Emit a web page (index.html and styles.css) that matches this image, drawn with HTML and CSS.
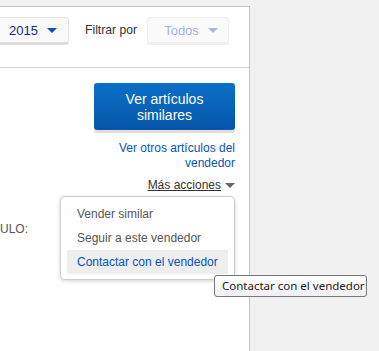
FILE: index.html
```html
<!DOCTYPE html>
<html lang="es">
<head>
<meta charset="utf-8">
<title>Ver artículos similares</title>
<link rel="stylesheet" href="styles.css">
</head>
<body>
<div class="page">
  <div class="panel">
    <div class="toolbar">
      <div class="select year">
        <span class="select-text">2015</span>
        <span class="caret"></span>
      </div>
      <span class="filter-label">Filtrar por</span>
      <div class="select all">
        <span class="select-text">Todos</span>
        <span class="caret"></span>
      </div>
    </div>
    <div class="content">
      <div class="actions">
        <a class="primary-btn" href="#">Ver artículos<br>similares</a>
        <a class="seller-link" href="#">Ver otros artículos del<br>vendedor</a>
        <div class="more">
          <a class="more-link" href="#">Más acciones</a>
          <span class="more-caret"></span>
        </div>
      </div>
      <div class="field-label">ULO:</div>
      <ul class="menu">
        <li class="menu-item">Vender similar</li>
        <li class="menu-item">Seguir a este vendedor</li>
        <li class="menu-item active">Contactar con el vendedor</li>
      </ul>
    </div>
  </div>
  <div class="side"></div>
</div>
<div class="tooltip">Contactar con el vendedor</div>
</body>
</html>
```
FILE: styles.css
```css
html, body {
  margin: 0;
  padding: 0;
}
body {
  width: 379px;
  height: 351px;
  overflow: hidden;
  background: #f1f1f1;
  font-family: "Liberation Sans", Arial, sans-serif;
  color: #333;
  position: relative;
}
.page {
  display: flex;
  height: 351px;
}
.panel {
  width: 249px;
  margin-top: 6px;
  background: #fff;
  border-top: 1px solid #c8c8c8;
  border-right: 1px solid #c8c8c8;
}
.toolbar {
  display: flex;
  align-items: flex-start;
  height: 50px;
  padding-top: 10px;
  border-bottom: 1px solid #cfcfcf;
}
.select {
  box-sizing: border-box;
  height: 28px;
  display: flex;
  align-items: center;
  background: #f9f9f9;
  border: 1px solid #e6e6e6;
  border-bottom: 3px solid #dcdcdc;
  border-radius: 3px;
  font-size: 13px;
}
.year {
  width: 81px;
  margin-left: -12px;
  padding-left: 21px;
  color: #0c2d8c;
  border-left: none;
}
.year .caret {
  margin-left: 9px;
  border-top: 5px solid #0654ba;
}
.caret {
  width: 0;
  height: 0;
  border-left: 5px solid transparent;
  border-right: 5px solid transparent;
}
.filter-label {
  margin-left: 16px;
  margin-top: 6px;
  font-size: 12.2px;
  line-height: 15px;
  color: #333;
}
.all {
  width: 82px;
  margin-left: 10px;
  padding-left: 16px;
  color: #a2b3e0;
  background: #fbfbfb;
  border-color: #efefef;
  border-bottom-color: #eeeeee;
}
.all .caret {
  margin-left: 9px;
  border-top: 5px solid #a8b8e2;
}
.content {
  position: relative;
  padding-right: 14px;
}
.actions {
  display: flex;
  flex-direction: column;
  align-items: flex-end;
}
.primary-btn {
  box-sizing: border-box;
  width: 141px;
  height: 47px;
  margin-top: 15px;
  display: flex;
  align-items: center;
  justify-content: center;
  text-align: center;
  font-size: 14px;
  line-height: 16px;
  color: #fff;
  text-decoration: none;
  border-radius: 3px;
  background: linear-gradient(#0b6fc6, #0757ab);
  box-shadow: 0 3px 0 #dedede;
}
.seller-link {
  margin-top: 11px;
  text-align: right;
  font-size: 12px;
  line-height: 15px;
  color: #0654ba;
  text-decoration: none;
}
.more {
  margin-top: 7px;
  display: flex;
  align-items: center;
}
.more-link {
  font-size: 12px;
  line-height: 15px;
  color: #333;
  text-decoration: underline;
}
.more-caret {
  margin-left: 4px;
  width: 0;
  height: 0;
  border-left: 5px solid transparent;
  border-right: 5px solid transparent;
  border-top: 5px solid #666;
}
.field-label {
  margin-top: 29px;
  font-size: 12px;
  color: #555;
}
.menu {
  position: absolute;
  left: 60px;
  top: 128px;
  box-sizing: border-box;
  width: 175px;
  margin: 0;
  padding: 5px 6px;
  list-style: none;
  background: #fff;
  border: 1px solid #cfcfcf;
  border-radius: 5px;
  box-shadow: 0 1px 4px rgba(0, 0, 0, 0.18);
}
.menu-item {
  height: 24px;
  line-height: 24px;
  padding-left: 10px;
  font-size: 12px;
  color: #555;
  white-space: nowrap;
}
.menu-item.active {
  background: #eeeeee;
  color: #0654ba;
}
.side {
  flex: 1;
}
.tooltip {
  position: absolute;
  left: 214px;
  top: 275px;
  box-sizing: border-box;
  width: 153px;
  height: 22px;
  padding-left: 7px;
  line-height: 20px;
  font-family: "Noto Sans", "Open Sans", sans-serif;
  font-size: 11.5px;
  color: #222;
  white-space: nowrap;
  background: linear-gradient(#ffffff, #f0f0f5);
  border: 1px solid #767676;
  border-radius: 3px;
}
```
